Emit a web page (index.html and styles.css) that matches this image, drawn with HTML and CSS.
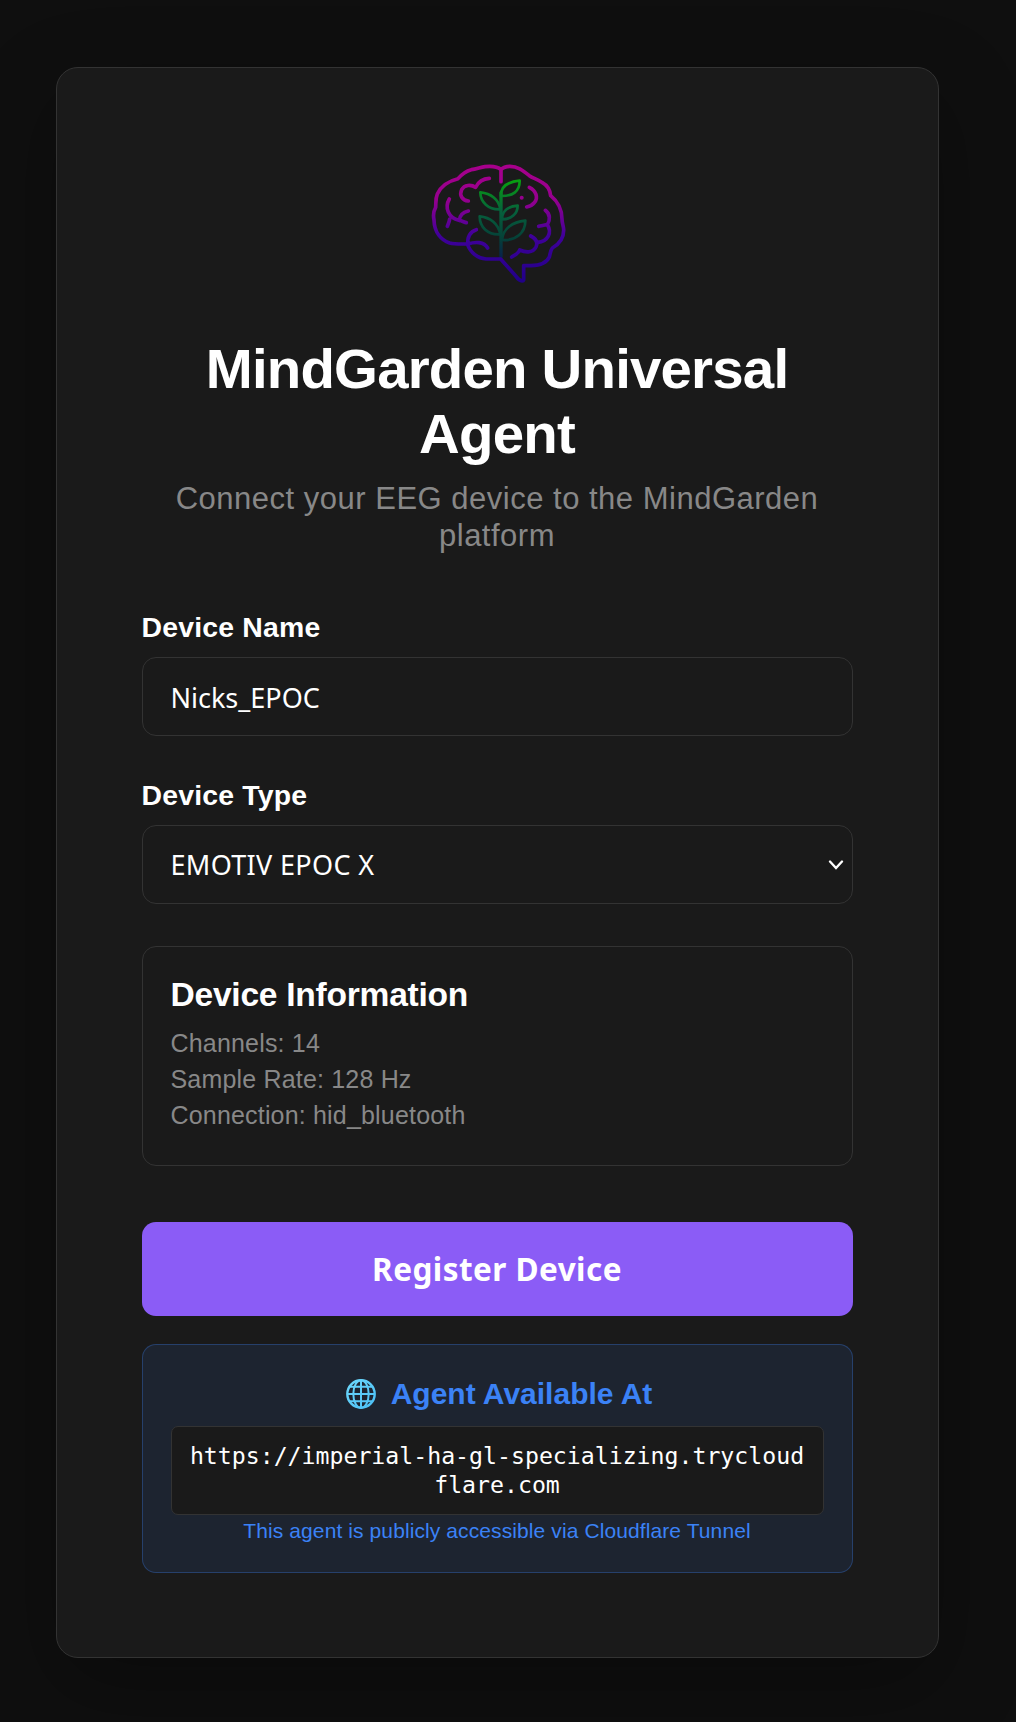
FILE: index.html
```html
<!DOCTYPE html>
<html lang="en">
<head>
<meta charset="utf-8">
<title>MindGarden Universal Agent</title>
<link rel="stylesheet" href="styles.css">
</head>
<body>
<main class="card">
  <header class="header">
    <svg class="logo" viewBox="0 0 528 438" fill="none" stroke-linecap="round" stroke-linejoin="round" aria-hidden="true">
      <defs>
        <linearGradient id="brain" gradientUnits="userSpaceOnUse" x1="0" y1="45" x2="0" y2="398">
          <stop offset="0" stop-color="#a8008c"/>
          <stop offset=".3" stop-color="#94008e"/>
          <stop offset=".6" stop-color="#40009a"/>
          <stop offset="1" stop-color="#200088"/>
        </linearGradient>
        <linearGradient id="plant" gradientUnits="userSpaceOnUse" x1="0" y1="90" x2="0" y2="325">
          <stop offset="0" stop-color="#08a010"/>
          <stop offset=".4" stop-color="#06603c"/>
          <stop offset=".75" stop-color="#054038"/>
          <stop offset="1" stop-color="#08204c"/>
        </linearGradient>
      </defs>
      <g stroke="url(#plant)" stroke-width="8">
        <path stroke-width="10" d="M273 320V128"/>
        <path d="M273 138C272 108 298 95 329 92C330 126 306 138 275 138"/>
        <path d="M271 178C267 148 242 130 211 127C211 156 235 180 271 178"/>
        <path d="M276 208C276 181 297 169 323 167C323 191 304 208 276 208"/>
        <path d="M271 253C265 221 241 202 209 199C209 232 233 256 271 253"/>
        <path d="M276 270C279 235 308 216 346 212C346 248 318 273 276 270"/>
      </g>
      <g stroke="url(#brain)" stroke-width="11">
        <path d="M273 95V59C262 49 244 48 225 50C211 52 198 58 184 59C164 64 154 74 144 86C115 93 92 110 82 132C76 146 78 158 77 172C69 186 69 196 72 210C73 248 94 270 119 279C134 283 152 282 172 282C181 308 204 326 228 327H272L318 379C325 389 331 392 337 393C342 393 341 388 341 382V347H363C392 346 410 339 418 321C421 310 421 302 427 294C449 282 462 262 461 238C460 226 456 219 456 208C456 182 448 158 422 137C420 120 412 106 397 98C384 88 370 85 358 77C337 60 322 49 300 49C289 49 280 51 273 59"/>
        <path d="M238 85C217 86 204 97 197 112C183 103 163 104 155 119C147 136 157 151 175 153"/>
        <path d="M118 147C103 173 115 204 147 211C157 213 163 217 169 218"/>
        <path d="M175 183C157 187 149 198 148 211M119 207C118 216 115 222 112 229"/>
        <path d="M199 239C180 244 171 263 174 282C195 275 222 274 233 294"/>
        <path d="M358 112C378 122 386 143 373 158C367 166 360 169 350 171"/>
        <path d="M406 181C421 192 421 211 412 224C403 225 396 227 386 229M412 224C427 247 414 275 383 277"/>
        <path d="M362 258C378 266 384 278 378 291C368 311 344 307 329 300C326 310 316 315 305 321"/>
        <path stroke-width="12" d="M335 143h.1"/>
      </g>
    </svg>
    <h1 class="title">MindGarden Universal Agent</h1>
    <p class="subtitle">Connect your EEG device to the MindGarden platform</p>
  </header>

  <form class="form">
    <div class="field">
      <label class="label" for="name">Device Name</label>
      <input class="control control-text" id="name" type="text" value="Nicks_EPOC">
    </div>
    <div class="field">
      <label class="label" for="type">Device Type</label>
      <div class="select">
        <select class="control control-select" id="type"><option>EMOTIV EPOC X</option></select>
        <svg class="chevron" viewBox="0 0 16 10" fill="none" stroke="#fff" stroke-width="2.3" stroke-linecap="round" aria-hidden="true"><path d="M2 1.5L8 8L14 1.5"/></svg>
      </div>
    </div>
    <section class="info">
      <h2 class="info-title">Device Information</h2>
      <p class="info-line">Channels: 14</p>
      <p class="info-line">Sample Rate: 128 Hz</p>
      <p class="info-line">Connection: hid_bluetooth</p>
    </section>
    <button class="submit" type="button">Register Device</button>
  </form>

  <section class="tunnel">
    <h2 class="tunnel-title">
      <svg class="globe" viewBox="0 0 30 30" fill="none" stroke="url(#globe)" stroke-width="2" aria-hidden="true">
        <defs><linearGradient id="globe" gradientUnits="userSpaceOnUse" x1="0" y1="0" x2="30" y2="30"><stop offset="0" stop-color="#6fd9fb"/><stop offset="1" stop-color="#48bdf5"/></linearGradient></defs>
        <circle cx="15" cy="15" r="13.7" stroke-width="2.4"/>
        <ellipse cx="15" cy="15" rx="7.7" ry="13.8"/>
        <path d="M15 1V29M1 15.01H29M3.5 7.8H26.5M3.5 22.2H26.5"/>
      </svg>
      <span>Agent Available At</span>
    </h2>
    <div class="url">https://imperial-ha-gl-specializing.trycloudflare.com</div>
    <p class="note">This agent is publicly accessible via Cloudflare Tunnel</p>
  </section>
</main>
</body>
</html>
```
FILE: styles.css
```css
* { box-sizing: border-box; }

body {
  margin: 0;
  min-height: 1722px;
  padding: 67px 77px 64px 56px;
  background: #0f0f0f;
  color: #fff;
  font-family: "Liberation Sans", Arial, sans-serif;
}

h1, h2, p { margin: 0; }

.card {
  height: 1591px;
  padding: 82px 85.5px 82px 84.5px;
  background: #1a1a1a;
  border: 1px solid #333;
  border-radius: 22px;
  box-shadow: 0 28px 85px rgba(0, 0, 0, .3);
}

.header { text-align: center; }

.logo { display: block; width: 176px; height: 146px; margin: 0 auto 40px 268.5px; }

.title { font-size: 56.4px; line-height: 65px; font-weight: 700; letter-spacing: -.8px; }

.subtitle {
  margin-top: 14px;
  color: #888;
  font-size: 31px;
  line-height: 37px;
  letter-spacing: .5px;
}

.form { margin-top: 56px; }

.field { margin-bottom: 42px; }

.label {
  display: block;
  height: 47px;
  font-size: 28.4px;
  line-height: 35px;
  font-weight: 700;
  letter-spacing: .2px;
}

.control {
  display: block;
  width: 100%;
  height: 79px;
  padding: 0 28px;
  appearance: none;
  background: #1a1a1a;
  color: #fff;
  border: 1px solid #333;
  border-radius: 14px;
  font: 27px "Noto Sans", sans-serif;
}

.control-text { padding-top: 1px; }

.control-select { padding-bottom: 1px; letter-spacing: .33px; }

.select { display: grid; align-items: center; }
.select > * { grid-area: 1 / 1; }

.chevron { justify-self: end; width: 16px; height: 10px; margin-right: 9px; }

.info {
  height: 220px;
  padding: 28px;
  border: 1px solid #333;
  border-radius: 14px;
}

.info-title { font-size: 33.6px; line-height: 39px; margin-bottom: 11px; letter-spacing: -.26px; }

.info-line { color: #888; font-size: 25px; line-height: 36px; letter-spacing: .18px; }

.submit {
  display: block;
  width: 100%;
  height: 94px;
  margin-top: 56px;
  padding: 0 6px 2px;
  background: #8b5cf6;
  color: #fff;
  border: 0;
  border-radius: 14px;
  font: 700 31.5px "Noto Sans", sans-serif;
  letter-spacing: .45px;
}

.tunnel {
  height: 229px;
  margin-top: 28px;
  padding: 28px;
  text-align: center;
  color: #3b82f6;
  background: rgba(59, 130, 246, .1);
  border: 1px solid rgba(59, 130, 246, .3);
  border-radius: 14px;
}

.tunnel-title {
  display: flex;
  justify-content: center;
  align-items: center;
  gap: 15px;
  height: 42px;
  margin-bottom: 11px;
  padding-left: 4px;
  font-size: 30px;
}

.globe { width: 30px; height: 30px; }

.url {
  height: 89px;
  padding: 14px;
  color: #fff;
  background: #1a1a1a;
  border: 1px solid #333;
  border-radius: 7px;
  font: 23.2px/29px "DejaVu Sans Mono", monospace;
  word-break: break-all;
}

.note { margin-top: 3px; font-size: 21px; line-height: 26px; letter-spacing: .1px; }
```
